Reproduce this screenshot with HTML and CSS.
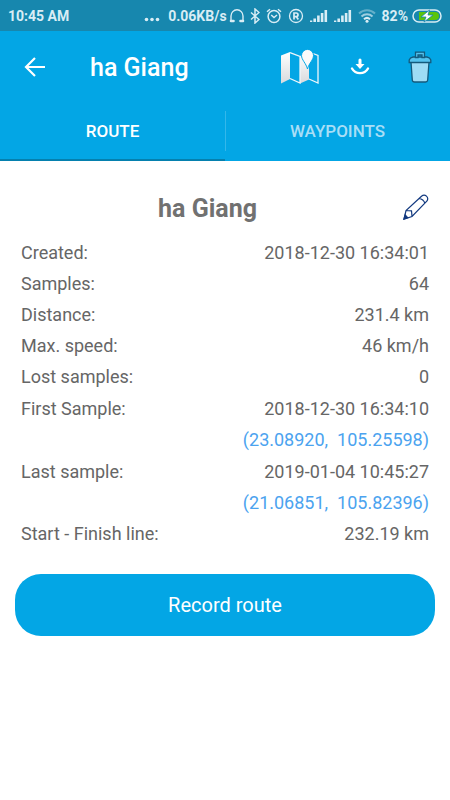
FILE: index.html
```html
<!DOCTYPE html>
<html lang="en">
<head>
<meta charset="utf-8">
<meta name="viewport" content="width=device-width, initial-scale=1">
<title>ha Giang</title>
<link rel="stylesheet" href="styles.css">
</head>
<body>
<div class="status">
  <span>10:45 AM</span>
  <div class="status-right">
    <svg class="dots" width="16" height="16" viewBox="0 0 16 16"><g fill="currentColor"><circle cx="2.500" cy="11.500" r="1.800"/><circle cx="8" cy="11.500" r="1.800"/><circle cx="13.500" cy="11.500" r="1.800"/></g></svg>
    <span class="speed">0.06KB/s</span>
    <svg width="16" height="16" viewBox="0 0 16 16"><path d="M2 12V8a6 6.200 0 0 1 12 0v4" fill="none" stroke="currentColor" stroke-width="1.400"/><path d="M2 13h2.500M11.500 13H14" stroke="currentColor" stroke-width="2.600" stroke-linecap="round"/></svg>
    <svg class="bluetooth" width="10" height="16" viewBox="0 0 10 16"><path d="M1 4.500l8 7-4 3.500V1l4 3.500-8 7" fill="none" stroke="currentColor" stroke-width="1.500"/></svg>
    <svg class="alarm" width="16" height="16" viewBox="0 0 16 16"><g fill="none" stroke="currentColor" stroke-width="1.500"><circle cx="8" cy="8.500" r="5.900"/><path d="M5.200 7L8 9.500 11 7M1 3.800L4 1.200M15 3.800L12 1.200"/></g></svg>
    <svg width="16" height="16" viewBox="0 0 16 16"><g fill="none" stroke="currentColor"><circle cx="8" cy="8" r="6.500" stroke-width="1.300"/><path d="M6 11.500V5h2.200a1.800 1.800 0 0 1 0 3.600H6M8.300 8.600l2 2.900" stroke-width="1.700"/></g></svg>
    <svg class="signal" width="18" height="16" viewBox="0 0 18 16"><path d="M1 14v-1.500M4.700 14v-3.500M8.400 14V7.500M12.100 14V5M15.800 14V2" stroke="currentColor" stroke-width="2.600"/></svg>
    <svg class="signal" width="18" height="16" viewBox="0 0 18 16"><path d="M1 14v-1.500M4.700 14v-3.500M8.400 14V7.500M12.100 14V5M15.800 14V2" stroke="currentColor" stroke-width="2.600"/></svg>
    <svg class="wifi" width="18" height="16" viewBox="0 0 18 16"><g fill="none" stroke="currentColor" stroke-width="2"><path d="M1 5.500a11.500 11.500 0 0 1 16 0" opacity=".4"/><path d="M3.500 8.400a8 8 0 0 1 11 0" opacity=".7"/><path d="M6 11.200a4.500 4.500 0 0 1 6 0"/></g><circle cx="9" cy="13.300" r="1.500" fill="currentColor"/></svg>
    <span class="percent">82%</span>
    <svg width="30" height="16" viewBox="0 0 30 16"><rect x="1" y="2" width="28" height="12" rx="6" fill="none" stroke="currentColor" stroke-width="1.500"/><path d="M7 4h16a4 4 0 0 1 0 8H7z" fill="#5bc40c"/><path d="M17.500 2L9 9h5l-2 5 9-7h-5z" fill="#fff" stroke="#1787ae" stroke-width=".8"/></svg>
  </div>
</div>
<header class="header">
  <div class="toolbar">
    <button class="icon-button back" aria-label="Back"><svg width="22" height="22" viewBox="0 0 22 22"><path d="M21 11H2.500M11 2l-9 9 9 9" fill="none" stroke="#fff" stroke-width="2.200"/></svg></button>
    <h1>ha Giang</h1>
    <div class="actions">
      <button class="icon-button" aria-label="Map"><svg width="40" height="36" viewBox="0 0 40 36">
        <defs><linearGradient id="paper" x1="0" y1="0" x2="0" y2="1"><stop offset="0" stop-color="#fff"/><stop offset="1" stop-color="#d8dadd"/></linearGradient></defs>
        <path d="M1 6.500L10 3v27L1 34.500zM20 7l9-3v26.500l-9 4z" fill="url(#paper)"/>
        <path d="M10 3.600L20 7.500v26.500L10 29.500M29 30l9 4V6.500L33 4.500" fill="none" stroke="#eef6fb" stroke-width="1.300"/>
        <path d="M27.500 20C26 14 21.500 11 21.500 6.400a6 6 0 0 1 12 0C33.500 11 29 14 27.500 20z" fill="#fafafa" stroke="#03a6e5" stroke-width="1"/></svg></button>
      <button class="icon-button" aria-label="Download"><svg width="20" height="18" viewBox="0 0 20 18"><g fill="none" stroke="#fff" stroke-width="2.400" stroke-linecap="round"><path d="M2 10.500c3.500 6.200 12.500 6.200 16 0"/><path d="M10 2v5" stroke-width="3"/></g><path d="M5.500 6h9L10 11z" fill="#fff"/></svg></button>
      <button class="icon-button" aria-label="Delete"><svg width="24" height="32" viewBox="0 0 24 32"><g fill="#9edcf5" stroke="#145a7c" stroke-width="1.300"><path d="M3 11h18l-1.300 18q-.2 2-2.200 2h-11q-2 0-2.200-2z"/><path d="M1.200 11.500V9Q2 6.500 5 6h14q3 .5 3.800 3v2.500z" fill="#55c3ee"/><path d="M7.500 6.500V1.200h9v5.300h-2.500V4h-4v2.500z" fill="#55c3ee"/></g></svg></button>
    </div>
  </div>
  <nav class="tabs">
    <a class="tab active" href="#route" aria-current="page">ROUTE</a>
    <a class="tab" href="#waypoints">WAYPOINTS</a>
  </nav>
</header>
<main id="route">
  <div class="heading">
    <h2>ha Giang</h2>
    <button class="icon-button edit" aria-label="Edit name"><svg width="26" height="26" viewBox="0 0 26 26"><g fill="none" stroke="#12397f" stroke-width="1.200"><path d="M1 25l2-8.500L18.500 2.200c3.500-3 8 1.300 5.300 5L9 22.500zM3 16.500l5.500.3.500 5.700M16 4.500q4.500.5 6 5"/><path d="M1 25l1.200-4 2.500 2.700z" fill="#12397f"/></g></svg></button>
  </div>
  <table>
    <tr><th scope="row">Created:</th><td>2018-12-30 16:34:01</td></tr>
    <tr><th scope="row">Samples:</th><td>64</td></tr>
    <tr><th scope="row">Distance:</th><td>231.4 km</td></tr>
    <tr><th scope="row">Max. speed:</th><td>46 km/h</td></tr>
    <tr><th scope="row">Lost samples:</th><td>0</td></tr>
    <tr class="group"><th scope="row">First Sample:</th><td>2018-12-30 16:34:10</td></tr>
    <tr><th></th><td><a href="#first">(23.08920,&nbsp; 105.25598)</a></td></tr>
    <tr class="group"><th scope="row">Last sample:</th><td>2019-01-04 10:45:27</td></tr>
    <tr><th></th><td><a href="#last">(21.06851,&nbsp; 105.82396)</a></td></tr>
    <tr><th scope="row">Start - Finish line:</th><td>232.19 km</td></tr>
  </table>
  <button class="record">Record route</button>
</main>
</body>
</html>
```
FILE: styles.css
```css
* { box-sizing: border-box; }
body {
  margin: 0;
  background: #fff;
  color: #666;
  font-family: Roboto, "Liberation Sans", sans-serif;
}
button {
  padding: 0;
  border: 0;
  background: none;
  font: inherit;
  cursor: pointer;
}
a { text-decoration: none; }
svg { display: block; flex: none; }
h1, h2 { margin: 0; font-size: 25px; line-height: 32px; }

.status {
  display: flex;
  align-items: center;
  justify-content: space-between;
  height: 31px;
  padding: 0 8px;
  background: #1787ae;
  color: #d9edf5;
  font-size: 14px;
  font-weight: 700;
}
.status-right { display: flex; align-items: center; }
.speed { margin: 0 2px 0 8px; }
.bluetooth { margin-left: 5px; }
.alarm { margin: 0 6px; }
.signal { margin-left: 6px; }
.wifi { margin-left: 6px; }
.percent { margin: 0 4px 0 6px; }

.header { background: #03a6e5; color: #fff; }
.toolbar {
  display: flex;
  align-items: center;
  height: 72px;
  padding: 0 10px 0 24px;
}
h1 { padding-top: 2px; font-weight: 500; }
.icon-button { display: flex; align-items: center; justify-content: center; }
.back { margin-right: 44px; }
.actions {
  display: flex;
  align-items: center;
  gap: 20px;
  margin-left: auto;
}
.actions .icon-button { width: 40px; height: 40px; }
.tabs { display: flex; height: 58px; }
.tab {
  display: flex;
  flex: 1;
  align-items: center;
  justify-content: center;
  position: relative;
  color: #a9def6;
  font-size: 17px;
  font-weight: 500;
  border-bottom: 2px solid transparent;
}
.active { color: #fff; border-bottom-color: #0580ae; }
.tab + .tab::before {
  content: "";
  position: absolute;
  left: 0;
  top: 8px;
  bottom: 8px;
  width: 1px;
  background: #34b7ea;
}

main { padding: 28px 15px; }
.heading {
  display: grid;
  grid-template-columns: 1fr 32px;
  align-items: center;
  padding-right: 3px;
}
h2 { padding-top: 4px; text-align: center; color: #717171; font-weight: 700; }
table {
  width: 100%;
  margin-top: 12px;
  padding: 0 6px;
  border-spacing: 0;
  font-size: 18px;
  line-height: 31px;
}
th, td { padding: 0; font-weight: 400; }
th { text-align: left; }
td { text-align: right; }
td a { color: #4ba3ef; }
.group th, .group td { padding-top: 1px; }
.record {
  display: block;
  width: 100%;
  height: 62px;
  margin-top: 25px;
  border-radius: 26px;
  background: #03a6e5;
  color: #fff;
  font-size: 20px;
}
```
